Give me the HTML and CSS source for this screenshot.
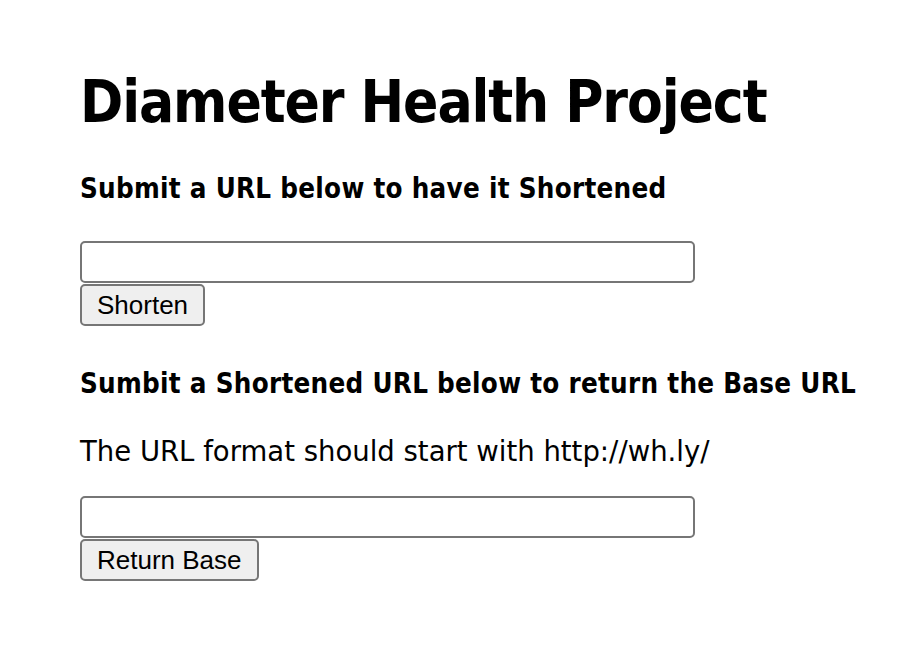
FILE: index.html
```html
<!DOCTYPE html>
<html>
<head>
<meta charset="utf-8">
<link rel="stylesheet" href="styles.css">
</head>
<body>
<main class="page">
  <h1 class="title">Diameter Health Project</h1>
  <section class="block">
    <h3 class="subtitle">Submit a URL below to have it Shortened</h3>
    <form class="form">
      <input class="field" type="text">
      <button class="btn" type="button">Shorten</button>
    </form>
  </section>
  <section class="block second">
    <h3 class="subtitle">Sumbit a Shortened URL below to return the Base URL</h3>
    <p class="note">The URL format should start with http://wh.ly/</p>
    <form class="form form-tight">
      <input class="field" type="text">
      <button class="btn" type="button">Return Base</button>
    </form>
  </section>
</main>
</body>
</html>
```
FILE: styles.css
```css
html, body {
  margin: 0;
  padding: 0;
  background: #fff;
}
.page {
  padding: 68px 0 0 80px;
  font-family: "DejaVu Sans", Verdana, sans-serif;
  color: #000;
}
.title {
  margin: 0;
  font-family: "DejaVu Sans Condensed", "DejaVu Sans", sans-serif;
  font-stretch: condensed;
  font-size: 58px;
  line-height: 68px;
  font-weight: bold;
  letter-spacing: -1.1px;
}
.subtitle {
  margin: 0;
  font-family: "DejaVu Sans Condensed", "DejaVu Sans", sans-serif;
  font-stretch: condensed;
  font-size: 27.5px;
  line-height: 32px;
  font-weight: bold;
  letter-spacing: 0.28px;
}
.block {
  margin-top: 36px;
}
.second {
  margin-top: 41px;
}
.note {
  margin: 36px 0 0;
  font-size: 27.5px;
  line-height: 32px;
}
.form {
  display: flex;
  flex-direction: column;
  align-items: flex-start;
  gap: 1px;
  margin-top: 37px;
}
.form-tight {
  margin-top: 29px;
}
.field {
  box-sizing: border-box;
  width: 615px;
  height: 42px;
  margin: 0;
  border: 2px solid #767676;
  border-radius: 5px;
  background: #fff;
}
.btn {
  box-sizing: border-box;
  height: 42px;
  margin: 0;
  padding: 0 15px;
  border: 2px solid #767676;
  border-radius: 5px;
  background: #efefef;
  font-family: "Liberation Sans", Arial, sans-serif;
  font-size: 26px;
  color: #000;
}
```
